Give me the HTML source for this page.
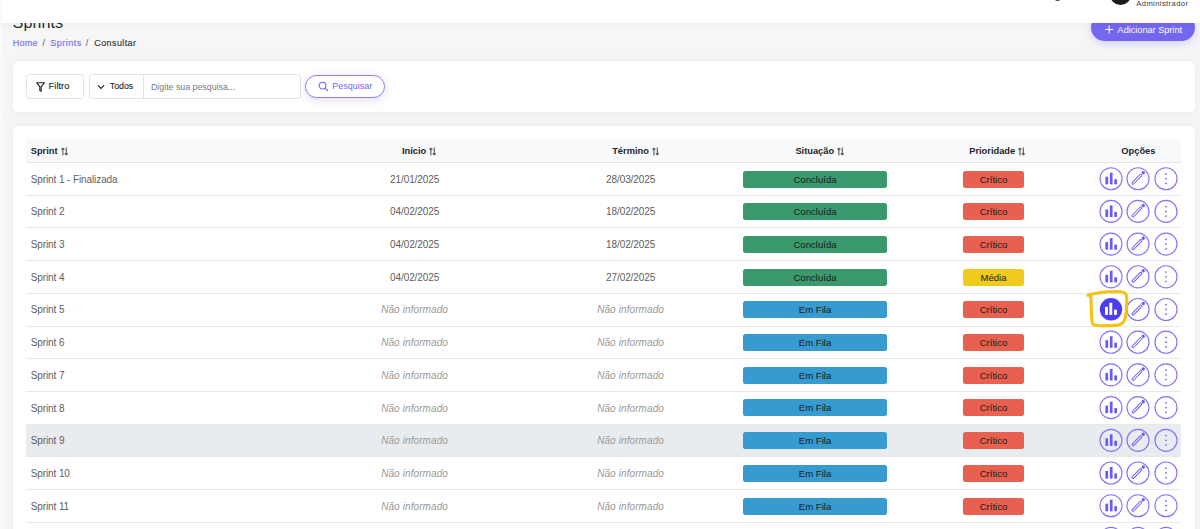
<!DOCTYPE html>
<html><head><meta charset="utf-8">
<style>
*{box-sizing:border-box;margin:0;padding:0}
html,body{width:1200px;height:529px;overflow:hidden}
body{background:#f6f6f7;font-family:"Liberation Sans",sans-serif;position:relative;color:#555}
.abs{position:absolute}
.strip{left:0;top:0;width:1.6px;height:529px;background:#f9f9f9;z-index:6}
.title{left:12.6px;top:12.1px;font-size:16.2px;line-height:20px;color:#2c2c2c;white-space:nowrap}
.header{left:0;top:0;width:1200px;height:22.8px;background:#fff;box-shadow:0 2px 5px rgba(0,0,0,0.035);z-index:5}
.bc{top:36.5px;font-size:9px;line-height:12px;white-space:nowrap;letter-spacing:0.3px}
.bc .l{color:#7a6df4;-webkit-text-stroke:0.15px #7a6df4}
.bc .s{color:#555}
.bc .c{color:#333;-webkit-text-stroke:0.15px #333}
.addbtn{left:1091px;top:14px;width:104px;height:27px;border-radius:14px;background:#7367f0;box-shadow:0 3px 8px rgba(115,103,240,0.25);color:#fff;font-size:9.2px;z-index:1}
.card{left:13px;width:1181.6px;background:#fff;border-radius:6px;box-shadow:0 0 12px rgba(0,0,0,0.055)}
.btn{border:1px solid #dfe3e8;border-radius:3.5px;background:#fff}
.pesq{left:305.3px;top:74.9px;width:79.6px;height:22.8px;border:1.3px solid #8a7ef6;border-radius:12px;background:#fff;box-shadow:0 2px 8px rgba(115,103,240,0.22)}
.th{position:absolute;font-weight:bold;font-size:9.3px;color:#24242a;white-space:nowrap;top:140.2px;line-height:23px}
.row{position:absolute;left:26px;width:1155px;border-bottom:1px solid #e6e8ec;background:#fff}
.row.hov{background:#e9ecef}
.cell{position:absolute;top:0;font-size:10px;letter-spacing:-0.1px;line-height:33px;color:#5e5e5e;white-space:nowrap}
.c1{left:4.7px}
.cc{width:120px;text-align:center}
.na{font-style:italic;color:#999;font-size:10px;letter-spacing:0.1px}
.badge{position:absolute;top:7.6px;height:17px;border-radius:2.5px;font-size:9.6px;color:#152020;text-align:center;line-height:17px}
.bs{left:717px;width:144px}
.bp{left:937px;width:61px}
.ic{position:absolute;top:4.3px;width:23px;height:23px;border:1px solid #7a6cf7;border-radius:50%}
.ic svg{position:absolute;left:-1px;top:-1px}
.i1{left:1073.2px}.i2{left:1100.3px}.i3{left:1128.2px}
.bars rect{fill:#6c5cf6}
.act{background:#4d3ff0;border-color:#4d3ff0}
.act .bars rect{fill:#fff}
.pen{fill:none;stroke:#6c5cf6;stroke-width:1.1}
.pentip{fill:#6c5cf6}
.i3 circle{fill:#6c5cf6}
.t9{font-size:9px;line-height:10px;white-space:nowrap}
.arr{margin-left:3px;vertical-align:-1.7px}

.ics{position:absolute}
.cir{fill:none;stroke:#8276f8;stroke-width:1.15}
.fil{fill:#6a5bf7}
.pen{fill:none;stroke:#6a5bf7;stroke-width:0.95}

</style></head>
<body>
<div class="abs strip"></div>
<div class="abs title">Sprints</div>
<div class="abs header">
  <div class="abs" style="left:1054px;top:-13px;font-size:13px;line-height:13px;color:#333">g</div>
  <div class="abs" style="left:1110px;top:-15.6px;width:21px;height:21px;border-radius:50%;background:#1b1b1b"></div>
  <div class="abs" style="left:1136.3px;top:-1px;font-size:7.6px;letter-spacing:0.4px;color:#3a3a3a;line-height:9px">Administrador</div>
</div>
<div class="abs bc" style="left:12.7px"><span class="l">Home</span></div><div class="abs bc" style="left:42.6px"><span class="s">/</span></div><div class="abs bc" style="left:50.3px;letter-spacing:0.5px"><span class="l">Sprints</span></div><div class="abs bc" style="left:85.8px"><span class="s">/</span></div><div class="abs bc" style="left:94.3px;letter-spacing:0.4px"><span class="c">Consultar</span></div>
<div class="abs addbtn">
  <svg class="abs" style="left:14px;top:11px" width="9" height="9" viewBox="0 0 9 9"><path d="M4.2 0.5V8.5M0.2 4.5H8.2" stroke="#fff" stroke-width="1.1" fill="none"/></svg>
  <div class="abs" style="left:26.6px;top:10.6px;font-size:9.15px;line-height:10px;color:#fff;white-space:nowrap">Adicionar Sprint</div>
</div>
<div class="abs card" style="top:61px;height:51px"></div>
<div class="abs btn" style="left:26.4px;top:74.3px;width:57.2px;height:24.6px"></div>
<svg class="abs" style="left:36px;top:81.5px" width="9" height="10" viewBox="0 0 9 10"><path d="M0.7 0.8H8.3L5.2 4.6V9.2L3.8 8.4V4.6Z" fill="none" stroke="#222" stroke-width="1.1" stroke-linejoin="round"/></svg>
<div class="abs t9" style="left:48.6px;top:80.8px;font-size:9.4px;color:#2a2a2a;-webkit-text-stroke:0.12px #2a2a2a">Filtro</div>
<div class="abs btn" style="left:89px;top:74.2px;width:211.5px;height:24.6px"></div>
<div class="abs" style="left:143.4px;top:75px;width:1px;height:22.5px;background:#dfe3e8"></div>
<svg class="abs" style="left:96.5px;top:83.5px" width="8" height="6" viewBox="0 0 8 6"><path d="M1 1.3L4 4.3L7 1.3" fill="none" stroke="#222" stroke-width="1.2"/></svg>
<div class="abs t9" style="left:109.8px;top:81px;color:#2a2a2a;font-size:8.8px;-webkit-text-stroke:0.12px #2a2a2a">Todos</div>
<div class="abs t9" style="left:151px;top:81.5px;color:#7a7a7a;font-size:8.8px">Digite sua pesquisa...</div>
<div class="abs pesq"></div>
<svg class="abs" style="left:318px;top:80.5px" width="11" height="11" viewBox="0 0 11 11"><circle cx="4.6" cy="4.6" r="3.4" fill="none" stroke="#7367f0" stroke-width="1.1"/><path d="M7.1 7.1L10 10" stroke="#7367f0" stroke-width="1.1"/></svg>
<div class="abs t9" style="left:332.3px;top:81px;color:#7367f0">Pesquisar</div>
<div class="abs card" style="top:126px;height:420px"></div>
<div class="abs" style="left:26px;top:139px;width:1155px;height:24px;background:#f8f9fa;border-bottom:1px solid #e3e6ea"></div>
<div class="th" style="left:30.7px">Sprint<svg class="arr" width="7" height="9" viewBox="0 0 7 9"><path d="M1.9 8.4V1.2M0.4 2.7L1.9 1.2L3.4 2.7M5.3 0.6V7.8M3.8 6.3L5.3 7.8L6.8 6.3" fill="none" stroke="#555" stroke-width="1.1"/></svg></div>
<div class="th" style="left:401.9px">Início<svg class="arr" width="7" height="9" viewBox="0 0 7 9"><path d="M1.9 8.4V1.2M0.4 2.7L1.9 1.2L3.4 2.7M5.3 0.6V7.8M3.8 6.3L5.3 7.8L6.8 6.3" fill="none" stroke="#555" stroke-width="1.1"/></svg></div>
<div class="th" style="left:612.2px">Término<svg class="arr" width="7" height="9" viewBox="0 0 7 9"><path d="M1.9 8.4V1.2M0.4 2.7L1.9 1.2L3.4 2.7M5.3 0.6V7.8M3.8 6.3L5.3 7.8L6.8 6.3" fill="none" stroke="#555" stroke-width="1.1"/></svg></div>
<div class="th" style="left:795.4px">Situação<svg class="arr" width="7" height="9" viewBox="0 0 7 9"><path d="M1.9 8.4V1.2M0.4 2.7L1.9 1.2L3.4 2.7M5.3 0.6V7.8M3.8 6.3L5.3 7.8L6.8 6.3" fill="none" stroke="#555" stroke-width="1.1"/></svg></div>
<div class="th" style="left:969.2px">Prioridade<svg class="arr" width="7" height="9" viewBox="0 0 7 9"><path d="M1.9 8.4V1.2M0.4 2.7L1.9 1.2L3.4 2.7M5.3 0.6V7.8M3.8 6.3L5.3 7.8L6.8 6.3" fill="none" stroke="#555" stroke-width="1.1"/></svg></div>
<div class="th" style="left:1121.3px">Opções</div>
<div class="row" style="top:163px;height:33px"><div class="cell c1" style="top:-0.40px">Sprint 1 - Finalizada</div><div class="cell cc" style="left:328.6px;top:-0.40px">21/01/2025</div><div class="cell cc" style="left:544.6px;top:-0.40px">28/03/2025</div><div class="badge bs" style="top:7.50px;background:#3a9a6e">Concluída</div><div class="badge bp" style="top:7.50px;background:#e8604f">Crítico</div><svg class="ics" style="left:1071.55px;top:2.00px" width="26" height="26" viewBox="0 0 26 26"><g transform="translate(0 0.70)"><circle cx="13" cy="13" r="11.0" class="cir"/><g class="fil"><rect x="7.4" y="11" width="2.7" height="7.6"/><rect x="11.85" y="7" width="2.7" height="11.6"/><rect x="16.3" y="13.5" width="2.7" height="5.1"/></g></g></svg><svg class="ics" style="left:1099px;top:2.00px" width="26" height="26" viewBox="0 0 26 26"><g transform="translate(0 0.70)"><circle cx="13" cy="13" r="11.0" class="cir"/><g transform="translate(11.8 13.6) rotate(-45.5)"><rect x="-6.3" y="-1.05" width="13" height="2.1" rx="1.05" class="pen"/><rect x="7.6" y="-1.6" width="3.2" height="3.2" rx="1.4" class="fil"/></g></g></svg><svg class="ics" style="left:1126.55px;top:2.00px" width="26" height="26" viewBox="0 0 26 26"><g transform="translate(0 0.70)"><circle cx="13" cy="13" r="11.0" class="cir"/><g class="fil"><circle cx="13" cy="8.2" r="0.85"/><circle cx="13" cy="12.95" r="0.85"/><circle cx="13" cy="17.7" r="0.85"/></g></g></svg></div>
<div class="row" style="top:196px;height:32px"><div class="cell c1" style="top:-0.70px">Sprint 2</div><div class="cell cc" style="left:328.6px;top:-0.70px">04/02/2025</div><div class="cell cc" style="left:544.6px;top:-0.70px">18/02/2025</div><div class="badge bs" style="top:7.20px;background:#3a9a6e">Concluída</div><div class="badge bp" style="top:7.20px;background:#e8604f">Crítico</div><svg class="ics" style="left:1071.55px;top:2.00px" width="26" height="26" viewBox="0 0 26 26"><g transform="translate(0 0.40)"><circle cx="13" cy="13" r="11.0" class="cir"/><g class="fil"><rect x="7.4" y="11" width="2.7" height="7.6"/><rect x="11.85" y="7" width="2.7" height="11.6"/><rect x="16.3" y="13.5" width="2.7" height="5.1"/></g></g></svg><svg class="ics" style="left:1099px;top:2.00px" width="26" height="26" viewBox="0 0 26 26"><g transform="translate(0 0.40)"><circle cx="13" cy="13" r="11.0" class="cir"/><g transform="translate(11.8 13.6) rotate(-45.5)"><rect x="-6.3" y="-1.05" width="13" height="2.1" rx="1.05" class="pen"/><rect x="7.6" y="-1.6" width="3.2" height="3.2" rx="1.4" class="fil"/></g></g></svg><svg class="ics" style="left:1126.55px;top:2.00px" width="26" height="26" viewBox="0 0 26 26"><g transform="translate(0 0.40)"><circle cx="13" cy="13" r="11.0" class="cir"/><g class="fil"><circle cx="13" cy="8.2" r="0.85"/><circle cx="13" cy="12.95" r="0.85"/><circle cx="13" cy="17.7" r="0.85"/></g></g></svg></div>
<div class="row" style="top:228px;height:33px"><div class="cell c1" style="top:0.00px">Sprint 3</div><div class="cell cc" style="left:328.6px;top:0.00px">04/02/2025</div><div class="cell cc" style="left:544.6px;top:0.00px">18/02/2025</div><div class="badge bs" style="top:7.90px;background:#3a9a6e">Concluída</div><div class="badge bp" style="top:7.90px;background:#e8604f">Crítico</div><svg class="ics" style="left:1071.55px;top:3.00px" width="26" height="26" viewBox="0 0 26 26"><g transform="translate(0 0.10)"><circle cx="13" cy="13" r="11.0" class="cir"/><g class="fil"><rect x="7.4" y="11" width="2.7" height="7.6"/><rect x="11.85" y="7" width="2.7" height="11.6"/><rect x="16.3" y="13.5" width="2.7" height="5.1"/></g></g></svg><svg class="ics" style="left:1099px;top:3.00px" width="26" height="26" viewBox="0 0 26 26"><g transform="translate(0 0.10)"><circle cx="13" cy="13" r="11.0" class="cir"/><g transform="translate(11.8 13.6) rotate(-45.5)"><rect x="-6.3" y="-1.05" width="13" height="2.1" rx="1.05" class="pen"/><rect x="7.6" y="-1.6" width="3.2" height="3.2" rx="1.4" class="fil"/></g></g></svg><svg class="ics" style="left:1126.55px;top:3.00px" width="26" height="26" viewBox="0 0 26 26"><g transform="translate(0 0.10)"><circle cx="13" cy="13" r="11.0" class="cir"/><g class="fil"><circle cx="13" cy="8.2" r="0.85"/><circle cx="13" cy="12.95" r="0.85"/><circle cx="13" cy="17.7" r="0.85"/></g></g></svg></div>
<div class="row" style="top:261px;height:33px"><div class="cell c1" style="top:-0.30px">Sprint 4</div><div class="cell cc" style="left:328.6px;top:-0.30px">04/02/2025</div><div class="cell cc" style="left:544.6px;top:-0.30px">27/02/2025</div><div class="badge bs" style="top:7.60px;background:#3a9a6e">Concluída</div><div class="badge bp" style="top:7.60px;background:#f0cb1d">Média</div><svg class="ics" style="left:1071.55px;top:2.00px" width="26" height="26" viewBox="0 0 26 26"><g transform="translate(0 0.80)"><circle cx="13" cy="13" r="11.0" class="cir"/><g class="fil"><rect x="7.4" y="11" width="2.7" height="7.6"/><rect x="11.85" y="7" width="2.7" height="11.6"/><rect x="16.3" y="13.5" width="2.7" height="5.1"/></g></g></svg><svg class="ics" style="left:1099px;top:2.00px" width="26" height="26" viewBox="0 0 26 26"><g transform="translate(0 0.80)"><circle cx="13" cy="13" r="11.0" class="cir"/><g transform="translate(11.8 13.6) rotate(-45.5)"><rect x="-6.3" y="-1.05" width="13" height="2.1" rx="1.05" class="pen"/><rect x="7.6" y="-1.6" width="3.2" height="3.2" rx="1.4" class="fil"/></g></g></svg><svg class="ics" style="left:1126.55px;top:2.00px" width="26" height="26" viewBox="0 0 26 26"><g transform="translate(0 0.80)"><circle cx="13" cy="13" r="11.0" class="cir"/><g class="fil"><circle cx="13" cy="8.2" r="0.85"/><circle cx="13" cy="12.95" r="0.85"/><circle cx="13" cy="17.7" r="0.85"/></g></g></svg></div>
<div class="row" style="top:294px;height:33px"><div class="cell c1" style="top:-0.60px">Sprint 5</div><div class="cell cc na" style="left:328.6px;top:-0.60px">Não informado</div><div class="cell cc na" style="left:544.6px;top:-0.60px">Não informado</div><div class="badge bs" style="top:7.30px;background:#379bd0">Em Fila</div><div class="badge bp" style="top:7.30px;background:#e8604f">Crítico</div><svg class="ics" style="left:1071.55px;top:2.00px" width="26" height="26" viewBox="0 0 26 26"><g transform="translate(0 0.50)"><circle cx="13" cy="12.8" r="11.2" fill="#4c3ef0"/><g fill="#fff"><rect x="7.0" y="10.3" width="2.9" height="8.1"/><rect x="11.35" y="6.3" width="2.9" height="12.1"/><rect x="16.0" y="13.2" width="2.9" height="5.2"/></g></g></svg><svg class="ics" style="left:1099px;top:2.00px" width="26" height="26" viewBox="0 0 26 26"><g transform="translate(0 0.50)"><circle cx="13" cy="13" r="11.0" class="cir"/><g transform="translate(11.8 13.6) rotate(-45.5)"><rect x="-6.3" y="-1.05" width="13" height="2.1" rx="1.05" class="pen"/><rect x="7.6" y="-1.6" width="3.2" height="3.2" rx="1.4" class="fil"/></g></g></svg><svg class="ics" style="left:1126.55px;top:2.00px" width="26" height="26" viewBox="0 0 26 26"><g transform="translate(0 0.50)"><circle cx="13" cy="13" r="11.0" class="cir"/><g class="fil"><circle cx="13" cy="8.2" r="0.85"/><circle cx="13" cy="12.95" r="0.85"/><circle cx="13" cy="17.7" r="0.85"/></g></g></svg></div>
<div class="row" style="top:327px;height:32px"><div class="cell c1" style="top:-0.90px">Sprint 6</div><div class="cell cc na" style="left:328.6px;top:-0.90px">Não informado</div><div class="cell cc na" style="left:544.6px;top:-0.90px">Não informado</div><div class="badge bs" style="top:7.00px;background:#379bd0">Em Fila</div><div class="badge bp" style="top:7.00px;background:#e8604f">Crítico</div><svg class="ics" style="left:1071.55px;top:2.00px" width="26" height="26" viewBox="0 0 26 26"><g transform="translate(0 0.20)"><circle cx="13" cy="13" r="11.0" class="cir"/><g class="fil"><rect x="7.4" y="11" width="2.7" height="7.6"/><rect x="11.85" y="7" width="2.7" height="11.6"/><rect x="16.3" y="13.5" width="2.7" height="5.1"/></g></g></svg><svg class="ics" style="left:1099px;top:2.00px" width="26" height="26" viewBox="0 0 26 26"><g transform="translate(0 0.20)"><circle cx="13" cy="13" r="11.0" class="cir"/><g transform="translate(11.8 13.6) rotate(-45.5)"><rect x="-6.3" y="-1.05" width="13" height="2.1" rx="1.05" class="pen"/><rect x="7.6" y="-1.6" width="3.2" height="3.2" rx="1.4" class="fil"/></g></g></svg><svg class="ics" style="left:1126.55px;top:2.00px" width="26" height="26" viewBox="0 0 26 26"><g transform="translate(0 0.20)"><circle cx="13" cy="13" r="11.0" class="cir"/><g class="fil"><circle cx="13" cy="8.2" r="0.85"/><circle cx="13" cy="12.95" r="0.85"/><circle cx="13" cy="17.7" r="0.85"/></g></g></svg></div>
<div class="row" style="top:359px;height:33px"><div class="cell c1" style="top:-0.20px">Sprint 7</div><div class="cell cc na" style="left:328.6px;top:-0.20px">Não informado</div><div class="cell cc na" style="left:544.6px;top:-0.20px">Não informado</div><div class="badge bs" style="top:7.70px;background:#379bd0">Em Fila</div><div class="badge bp" style="top:7.70px;background:#e8604f">Crítico</div><svg class="ics" style="left:1071.55px;top:2.00px" width="26" height="26" viewBox="0 0 26 26"><g transform="translate(0 0.90)"><circle cx="13" cy="13" r="11.0" class="cir"/><g class="fil"><rect x="7.4" y="11" width="2.7" height="7.6"/><rect x="11.85" y="7" width="2.7" height="11.6"/><rect x="16.3" y="13.5" width="2.7" height="5.1"/></g></g></svg><svg class="ics" style="left:1099px;top:2.00px" width="26" height="26" viewBox="0 0 26 26"><g transform="translate(0 0.90)"><circle cx="13" cy="13" r="11.0" class="cir"/><g transform="translate(11.8 13.6) rotate(-45.5)"><rect x="-6.3" y="-1.05" width="13" height="2.1" rx="1.05" class="pen"/><rect x="7.6" y="-1.6" width="3.2" height="3.2" rx="1.4" class="fil"/></g></g></svg><svg class="ics" style="left:1126.55px;top:2.00px" width="26" height="26" viewBox="0 0 26 26"><g transform="translate(0 0.90)"><circle cx="13" cy="13" r="11.0" class="cir"/><g class="fil"><circle cx="13" cy="8.2" r="0.85"/><circle cx="13" cy="12.95" r="0.85"/><circle cx="13" cy="17.7" r="0.85"/></g></g></svg></div>
<div class="row" style="top:392px;height:33px"><div class="cell c1" style="top:-0.50px">Sprint 8</div><div class="cell cc na" style="left:328.6px;top:-0.50px">Não informado</div><div class="cell cc na" style="left:544.6px;top:-0.50px">Não informado</div><div class="badge bs" style="top:7.40px;background:#379bd0">Em Fila</div><div class="badge bp" style="top:7.40px;background:#e8604f">Crítico</div><svg class="ics" style="left:1071.55px;top:2.00px" width="26" height="26" viewBox="0 0 26 26"><g transform="translate(0 0.60)"><circle cx="13" cy="13" r="11.0" class="cir"/><g class="fil"><rect x="7.4" y="11" width="2.7" height="7.6"/><rect x="11.85" y="7" width="2.7" height="11.6"/><rect x="16.3" y="13.5" width="2.7" height="5.1"/></g></g></svg><svg class="ics" style="left:1099px;top:2.00px" width="26" height="26" viewBox="0 0 26 26"><g transform="translate(0 0.60)"><circle cx="13" cy="13" r="11.0" class="cir"/><g transform="translate(11.8 13.6) rotate(-45.5)"><rect x="-6.3" y="-1.05" width="13" height="2.1" rx="1.05" class="pen"/><rect x="7.6" y="-1.6" width="3.2" height="3.2" rx="1.4" class="fil"/></g></g></svg><svg class="ics" style="left:1126.55px;top:2.00px" width="26" height="26" viewBox="0 0 26 26"><g transform="translate(0 0.60)"><circle cx="13" cy="13" r="11.0" class="cir"/><g class="fil"><circle cx="13" cy="8.2" r="0.85"/><circle cx="13" cy="12.95" r="0.85"/><circle cx="13" cy="17.7" r="0.85"/></g></g></svg></div>
<div class="row hov" style="top:425px;height:32px"><div class="cell c1" style="top:-0.80px">Sprint 9</div><div class="cell cc na" style="left:328.6px;top:-0.80px">Não informado</div><div class="cell cc na" style="left:544.6px;top:-0.80px">Não informado</div><div class="badge bs" style="top:7.10px;background:#379bd0">Em Fila</div><div class="badge bp" style="top:7.10px;background:#e8604f">Crítico</div><svg class="ics" style="left:1071.55px;top:2.00px" width="26" height="26" viewBox="0 0 26 26"><g transform="translate(0 0.30)"><circle cx="13" cy="13" r="11.0" class="cir"/><g class="fil"><rect x="7.4" y="11" width="2.7" height="7.6"/><rect x="11.85" y="7" width="2.7" height="11.6"/><rect x="16.3" y="13.5" width="2.7" height="5.1"/></g></g></svg><svg class="ics" style="left:1099px;top:2.00px" width="26" height="26" viewBox="0 0 26 26"><g transform="translate(0 0.30)"><circle cx="13" cy="13" r="11.0" class="cir"/><g transform="translate(11.8 13.6) rotate(-45.5)"><rect x="-6.3" y="-1.05" width="13" height="2.1" rx="1.05" class="pen"/><rect x="7.6" y="-1.6" width="3.2" height="3.2" rx="1.4" class="fil"/></g></g></svg><svg class="ics" style="left:1126.55px;top:2.00px" width="26" height="26" viewBox="0 0 26 26"><g transform="translate(0 0.30)"><circle cx="13" cy="13" r="11.0" class="cir"/><g class="fil"><circle cx="13" cy="8.2" r="0.85"/><circle cx="13" cy="12.95" r="0.85"/><circle cx="13" cy="17.7" r="0.85"/></g></g></svg></div>
<div class="row" style="top:457px;height:33px"><div class="cell c1" style="top:-0.10px">Sprint 10</div><div class="cell cc na" style="left:328.6px;top:-0.10px">Não informado</div><div class="cell cc na" style="left:544.6px;top:-0.10px">Não informado</div><div class="badge bs" style="top:7.80px;background:#379bd0">Em Fila</div><div class="badge bp" style="top:7.80px;background:#e8604f">Crítico</div><svg class="ics" style="left:1071.55px;top:3.00px" width="26" height="26" viewBox="0 0 26 26"><g transform="translate(0 0.00)"><circle cx="13" cy="13" r="11.0" class="cir"/><g class="fil"><rect x="7.4" y="11" width="2.7" height="7.6"/><rect x="11.85" y="7" width="2.7" height="11.6"/><rect x="16.3" y="13.5" width="2.7" height="5.1"/></g></g></svg><svg class="ics" style="left:1099px;top:3.00px" width="26" height="26" viewBox="0 0 26 26"><g transform="translate(0 0.00)"><circle cx="13" cy="13" r="11.0" class="cir"/><g transform="translate(11.8 13.6) rotate(-45.5)"><rect x="-6.3" y="-1.05" width="13" height="2.1" rx="1.05" class="pen"/><rect x="7.6" y="-1.6" width="3.2" height="3.2" rx="1.4" class="fil"/></g></g></svg><svg class="ics" style="left:1126.55px;top:3.00px" width="26" height="26" viewBox="0 0 26 26"><g transform="translate(0 0.00)"><circle cx="13" cy="13" r="11.0" class="cir"/><g class="fil"><circle cx="13" cy="8.2" r="0.85"/><circle cx="13" cy="12.95" r="0.85"/><circle cx="13" cy="17.7" r="0.85"/></g></g></svg></div>
<div class="row" style="top:490px;height:33px"><div class="cell c1" style="top:-0.40px">Sprint 11</div><div class="cell cc na" style="left:328.6px;top:-0.40px">Não informado</div><div class="cell cc na" style="left:544.6px;top:-0.40px">Não informado</div><div class="badge bs" style="top:7.50px;background:#379bd0">Em Fila</div><div class="badge bp" style="top:7.50px;background:#e8604f">Crítico</div><svg class="ics" style="left:1071.55px;top:2.00px" width="26" height="26" viewBox="0 0 26 26"><g transform="translate(0 0.70)"><circle cx="13" cy="13" r="11.0" class="cir"/><g class="fil"><rect x="7.4" y="11" width="2.7" height="7.6"/><rect x="11.85" y="7" width="2.7" height="11.6"/><rect x="16.3" y="13.5" width="2.7" height="5.1"/></g></g></svg><svg class="ics" style="left:1099px;top:2.00px" width="26" height="26" viewBox="0 0 26 26"><g transform="translate(0 0.70)"><circle cx="13" cy="13" r="11.0" class="cir"/><g transform="translate(11.8 13.6) rotate(-45.5)"><rect x="-6.3" y="-1.05" width="13" height="2.1" rx="1.05" class="pen"/><rect x="7.6" y="-1.6" width="3.2" height="3.2" rx="1.4" class="fil"/></g></g></svg><svg class="ics" style="left:1126.55px;top:2.00px" width="26" height="26" viewBox="0 0 26 26"><g transform="translate(0 0.70)"><circle cx="13" cy="13" r="11.0" class="cir"/><g class="fil"><circle cx="13" cy="8.2" r="0.85"/><circle cx="13" cy="12.95" r="0.85"/><circle cx="13" cy="17.7" r="0.85"/></g></g></svg></div>
<div class="row" style="top:523px;height:32px"><div class="cell c1" style="top:-0.70px">Sprint 12</div><div class="cell cc na" style="left:328.6px;top:-0.70px">Não informado</div><div class="cell cc na" style="left:544.6px;top:-0.70px">Não informado</div><div class="badge bs" style="top:7.20px;background:#379bd0">Em Fila</div><div class="badge bp" style="top:7.20px;background:#e8604f">Crítico</div><svg class="ics" style="left:1071.55px;top:2.00px" width="26" height="26" viewBox="0 0 26 26"><g transform="translate(0 0.40)"><circle cx="13" cy="13" r="11.0" class="cir"/><g class="fil"><rect x="7.4" y="11" width="2.7" height="7.6"/><rect x="11.85" y="7" width="2.7" height="11.6"/><rect x="16.3" y="13.5" width="2.7" height="5.1"/></g></g></svg><svg class="ics" style="left:1099px;top:2.00px" width="26" height="26" viewBox="0 0 26 26"><g transform="translate(0 0.40)"><circle cx="13" cy="13" r="11.0" class="cir"/><g transform="translate(11.8 13.6) rotate(-45.5)"><rect x="-6.3" y="-1.05" width="13" height="2.1" rx="1.05" class="pen"/><rect x="7.6" y="-1.6" width="3.2" height="3.2" rx="1.4" class="fil"/></g></g></svg><svg class="ics" style="left:1126.55px;top:2.00px" width="26" height="26" viewBox="0 0 26 26"><g transform="translate(0 0.40)"><circle cx="13" cy="13" r="11.0" class="cir"/><g class="fil"><circle cx="13" cy="8.2" r="0.85"/><circle cx="13" cy="12.95" r="0.85"/><circle cx="13" cy="17.7" r="0.85"/></g></g></svg></div>
<svg class="abs" style="left:0;top:0;z-index:3" width="1200" height="529" viewBox="0 0 1200 529"><path d="M1087.9 295.2 C1089.6 294.2 1092 293.9 1094 293.7 L1100.6 292.6 C1106 291.8 1112 291.5 1117.3 291.5 C1121 291.6 1124.5 292.1 1126 294.2 C1127.2 296.7 1126.9 303 1126.5 308 C1126.2 314 1125.4 319 1123.6 321.9 C1122 324.2 1118 325.5 1113 325.6 L1100.6 325.7 C1096 325.6 1093.2 325.3 1092.4 323.2 C1091.6 320 1091.4 312 1091.1 303.6 C1090.9 299 1090.8 296.3 1090.7 295.3" fill="none" stroke="#f6c20f" stroke-width="3.1" stroke-linecap="round" stroke-linejoin="round"/></svg>
</body></html>
